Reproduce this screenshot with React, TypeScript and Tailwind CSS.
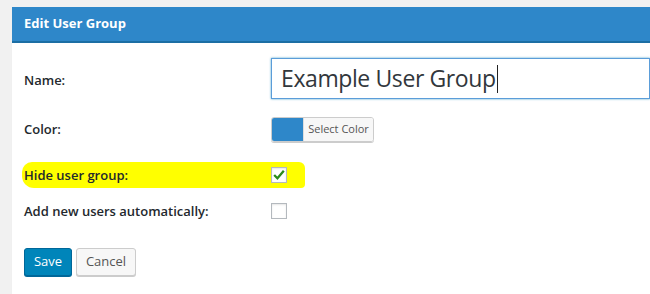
import React from "react";

const font = { fontFamily: '"Open Sans", "Noto Sans", sans-serif' };

function Checkbox({ checked }: { checked?: boolean }) {
  return (
    <span className="relative z-10 flex h-[16px] w-[16px] items-center justify-center border border-[#b4b9be] bg-white shadow-[inset_0_1px_2px_rgba(0,0,0,0.1)]">
      {checked && (
        <svg viewBox="0 0 16 16" className="h-[14px] w-[14px]">
          <path d="M2.5 8 L6.2 11.8 L13.5 3.2" fill="none" stroke="#2a8b1c" strokeWidth="2.6" strokeLinejoin="miter" />
        </svg>
      )}
    </span>
  );
}

export default function App() {
  return (
    <div className="h-[294px] w-[650px] overflow-hidden bg-[#f1f1f1] pl-[12px] pt-[7px]" style={font}>
      <div className="h-full bg-white shadow-[0_1px_1px_rgba(0,0,0,0.04)]">
        <div className="flex h-[36px] items-center border-b-2 border-[#1c6ea4] bg-[#2e87c9] pl-[12px] text-[13px] font-bold text-white">
          Edit User Group
        </div>

        <div className="pl-[12px] pt-[15px] text-[13px] font-semibold text-[#23282d]">
          <div className="flex h-[41px] items-center">
            <label className="w-[247px] pt-[4px]">Name:</label>
            <div className="flex h-[41px] flex-1 items-center border border-[#5b9dd9] pl-[9px] text-[23px] font-normal tracking-[-0.4px] text-[#32373c] shadow-[0_0_2px_rgba(30,140,190,0.8)]">
              Example User Group
              <span className="ml-[1px] inline-block h-[28px] w-[1px] bg-[#222]" />
            </div>
          </div>

          <div className="mt-[18px] flex h-[25px] items-center">
            <label className="w-[247px]">Color:</label>
            <div className="flex h-[25px] w-[103px] overflow-hidden rounded-[3px] border border-[#ccc] shadow-[0_1px_0_#ccc]">
              <span className="w-[31px] bg-[#2e87c9]" />
              <span className="flex flex-1 items-center justify-center border-l border-[#ddd] bg-[#f7f7f7] text-[11px] font-normal text-[#555]">
                Select Color
              </span>
            </div>
          </div>

          <div className="relative mt-[24px] flex h-[18px] items-center">
            <span className="absolute left-[-2px] top-[-4px] h-[26px] w-[283px] rounded-[10px_6px_4px_12px] bg-[#ffff00]" />
            <label className="relative w-[247px] pt-[2px]">Hide user group:</label>
            <Checkbox checked />
          </div>

          <div className="mt-[18px] flex h-[18px] items-center">
            <label className="w-[247px] pt-[2px]">Add new users automatically:</label>
            <Checkbox />
          </div>

          <div className="mt-[28px] flex gap-[4px] font-normal">
            <button className="h-[28px] w-[48px] rounded-[3px] border border-[#006799] bg-[#0085ba] text-[13px] text-white shadow-[0_1px_0_#006799]">
              Save
            </button>
            <button className="h-[28px] w-[60px] rounded-[3px] border border-[#ccc] bg-[#f7f7f7] text-[13px] text-[#555] shadow-[0_1px_0_#ccc]">
              Cancel
            </button>
          </div>
        </div>
      </div>
    </div>
  );
}
